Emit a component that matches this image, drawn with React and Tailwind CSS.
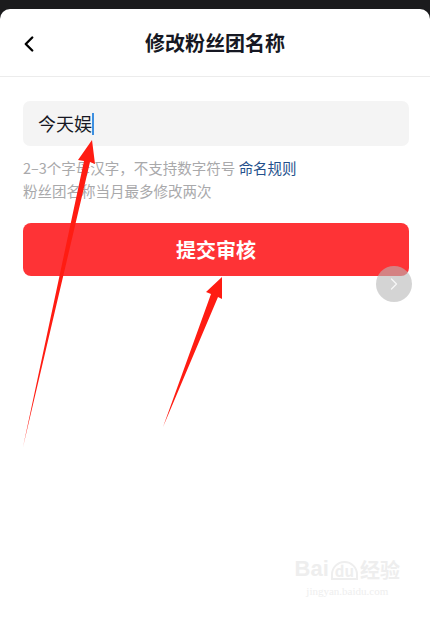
import React from 'react';
import { ChevronLeft, ChevronRight } from 'lucide-react';

const Arrows = () => (
  <svg className="absolute inset-0 pointer-events-none" width="430" height="617" viewBox="0 0 430 617">
    <polygon points="92,140 95,164 90,162 23,447 84,161 78,160" fill="#ff1c12" />
    <polygon points="222,277 222,299 218,297 163,427 211,294 206,292" fill="#ff1c12" />
  </svg>
);

const Watermark = () => (
  <div className="absolute right-[30px] bottom-[18px] flex flex-col items-center text-[#eeeeee] pointer-events-none">
    <div className="flex items-end gap-[2px] leading-none">
      <span className="text-[22px] font-bold" style={{ fontFamily: 'Arial, sans-serif' }}>Bai</span>
      <span className="text-[15px] font-bold rounded-t-full border-2 border-[#eeeeee] px-[2px]">du</span>
      <span className="text-[20px] font-bold">经验</span>
    </div>
    <span className="text-[11px] mt-[3px]" style={{ fontFamily: '"Liberation Serif", serif' }}>jingyan.baidu.com</span>
  </div>
);

export default function App() {
  return (
    <div
      className="relative w-[430px] h-[617px] overflow-hidden bg-[#1b1b1d]"
      style={{ fontFamily: '"Noto Sans CJK SC", "Noto Sans", sans-serif' }}
    >
      <div className="mt-[9px] h-[608px] bg-white rounded-t-[10px] flex flex-col">
        <div className="relative h-[68px] flex items-center justify-center border-b border-[#ececec]">
          <ChevronLeft className="absolute left-[16px] top-[22px] text-black" size={26} strokeWidth={2.2} />
          <h1 className="text-[20px] font-bold text-[#161823]">修改粉丝团名称</h1>
        </div>

        <div className="pl-[23px] pr-[21px] pt-[24px]">
          <div className="h-[45px] bg-[#f4f4f4] rounded-[7px] flex items-center px-[15px]">
            <span className="text-[18px] text-[#161823]">今天娱</span>
            <span className="w-[1.5px] h-[22px] bg-[#3d8fe0]" />
          </div>

          <div className="mt-[10px] text-[14.5px] leading-[23px] text-[#a9a9ab]">
            <p>
              2–3个字母汉字，不支持数字符号 <span className="text-[#24508c]">命名规则</span>
            </p>
            <p>粉丝团名称当月最多修改两次</p>
          </div>

          <button className="mt-[21px] w-full h-[53px] rounded-[8px] bg-[#fe3336] text-white text-[20px] font-bold">
            提交审核
          </button>
        </div>
      </div>

      <div className="absolute left-[376px] top-[266px] w-[36px] h-[36px] rounded-full bg-[#b8b8b8]/60 flex items-center justify-center">
        <ChevronRight className="text-white/80" size={20} strokeWidth={1.5} />
      </div>

      <Watermark />
      <Arrows />
    </div>
  );
}
